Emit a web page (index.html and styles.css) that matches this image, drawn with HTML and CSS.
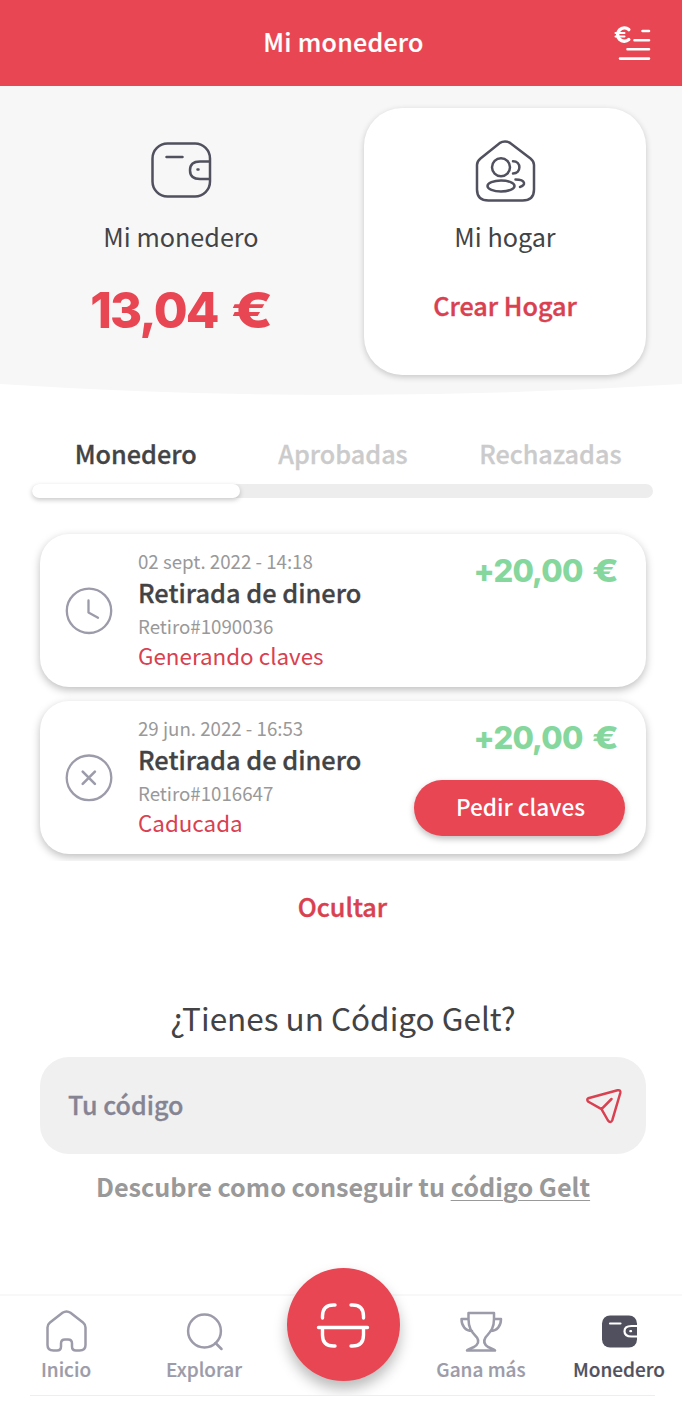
FILE: index.html
```html
<!DOCTYPE html>
<html lang="es">
<head>
<meta charset="utf-8">
<title>Mi monedero</title>
<link rel="stylesheet" href="styles.css">
</head>
<body>
<header class="topbar">
  <h1 class="topbar-title">Mi monedero</h1>
  <svg class="topbar-icon" width="40" height="40" viewBox="0 0 40 40" fill="none" stroke="#fff" stroke-width="2.600" stroke-linecap="round">
    <path d="M15.800 6.600A6.700 6.700 0 1 0 15.800 16.600" stroke-width="3.400"/>
    <path d="M2.500 10h9M2.500 13.400h9" stroke-width="2"/>
    <path d="M29.500 8h6.500M21.500 17.200h14.500M14.500 26.300h21.500M7 35.600h29"/>
  </svg>
</header>

<section class="hero">
  <div class="wallet">
    <svg class="hero-icon" width="62" height="62" viewBox="0 0 62 62" fill="none" stroke="#50505e" stroke-width="2.500" stroke-linecap="round">
      <rect x="2.500" y="4.500" width="57.500" height="53" rx="15"/>
      <path d="M16.500 18H32.500M59 22.500H50Q40 22.500 40 31.200T50 40H59M47.500 30.500h1" />
    </svg>
    <p class="hero-label">Mi monedero</p>
    <p class="balance">13,04 <span class="euro">€</span></p>
  </div>
  <div class="home-card">
    <svg class="hero-icon" width="62" height="66" viewBox="0 0 62 66" fill="none" stroke="#50505e" stroke-width="2.500" stroke-linecap="round">
      <path d="M25.500 4.200Q31 1 36.500 4.200L56.500 19.500Q60 22.300 60 26V50.500Q60 61.500 48.500 61.500H14.500Q3 61.500 3 50.500V26Q3 22.300 6.500 19.500Z"/>
      <circle cx="27" cy="28.300" r="9"/>
      <ellipse cx="27" cy="47" rx="13.500" ry="5.500"/>
      <path d="M39 22.200C47.500 22.200 47.500 34.500 39 34.500M41.500 40.500C52 40.500 52 46.500 46 48"/>
    </svg>
    <p class="hero-label">Mi hogar</p>
    <a class="create">Crear Hogar</a>
  </div>
</section>
<svg class="curve" width="682" height="11" viewBox="0 0 682 11"><path d="M0 0Q341 22 682 0Z" fill="#f7f7f7"/></svg>

<main>
  <nav class="tabs">
    <a class="tab active">Monedero</a>
    <a class="tab">Aprobadas</a>
    <a class="tab">Rechazadas</a>
  </nav>
  <div class="track"><div class="thumb"></div></div>

  <section class="moves">
    <article class="move">
      <svg class="move-icon" width="50" height="50" viewBox="0 0 50 50" fill="none" stroke="#9c9ba9" stroke-width="2.300" stroke-linecap="round" stroke-linejoin="round">
        <circle cx="25" cy="24.800" r="22.200"/><path d="M24.500 14.500v12l9.500 5.300"/>
      </svg>
      <div class="detail">
        <p class="small">02 sept. 2022 - 14:18</p>
        <h2 class="name">Retirada de dinero</h2>
        <p class="small ref">Retiro#1090036</p>
        <p class="status">Generando claves</p>
      </div>
      <div class="side"><p class="amount">+20,00 <span class="euro">€</span></p></div>
    </article>
    <article class="move">
      <svg class="move-icon" width="50" height="50" viewBox="0 0 50 50" fill="none" stroke="#9c9ba9" stroke-width="2.300" stroke-linecap="round">
        <circle cx="25" cy="24.800" r="22.300"/><path d="M18.700 18.700l12.200 12.200M30.900 18.700L18.700 30.900" stroke-width="2.600"/>
      </svg>
      <div class="detail">
        <p class="small">29 jun. 2022 - 16:53</p>
        <h2 class="name">Retirada de dinero</h2>
        <p class="small ref">Retiro#1016647</p>
        <p class="status">Caducada</p>
      </div>
      <div class="side"><p class="amount">+20,00 <span class="euro">€</span></p><button class="keys">Pedir claves</button></div>
    </article>
  </section>
  <a class="hide">Ocultar</a>

  <h2 class="question">¿Tienes un Código Gelt?</h2>
  <div class="field">
    <span class="placeholder">Tu código</span>
    <svg class="send" width="38" height="38" viewBox="0 0 38 38" fill="none" stroke="#d94150" stroke-width="2.500" stroke-linecap="round" stroke-linejoin="round">
      <path d="M3.200 12.200L32.500 4.300Q35.900 3.500 35.300 7L27.300 34.200Q25.500 37.800 23 34.500L16.500 23.200L3 15.500Q1.500 13.300 3.200 12.200ZM16.500 23.200L26.500 13"/>
    </svg>
  </div>
  <p class="hint">Descubre como conseguir tu <a class="code-link">código Gelt</a></p>
</main>

<footer class="bottom">
  <a class="item inicio">
    <svg width="44" height="44" viewBox="0 0 44 44" fill="none" stroke="#9c9ba9" stroke-width="2.500" stroke-linejoin="round">
      <path d="M18.500 3.800Q22.500 1 26.500 3.800L39 13.500Q41.500 15.500 41.500 18.500V36Q41.500 41.500 35.500 41.500H32Q28 41.500 28 37.500V34.500Q28 30.500 24 30.500H21Q17 30.500 17 34.500V37.500Q17 41.500 13 41.500H9.500Q3.500 41.500 3.500 36V18.500Q3.500 15.500 6 13.500Z"/>
    </svg>
    <span>Inicio</span>
  </a>
  <a class="item explorar">
    <svg width="44" height="44" viewBox="0 0 44 44" fill="none" stroke="#9c9ba9" stroke-width="2.500" stroke-linecap="round">
      <circle cx="22.500" cy="22" r="16.400"/><path d="M33.500 34l6 6"/>
    </svg>
    <span>Explorar</span>
  </a>
  <a class="item gana">
    <svg width="44" height="44" viewBox="0 0 44 44" fill="none" stroke="#9c9ba9" stroke-width="2.500" stroke-linecap="round" stroke-linejoin="round">
      <path d="M9.500 4H35V10C35 20 31 23 26.500 28.500Q23 34 29 38Q35 40.500 36 41.500H8Q9 40.500 15 38Q21.500 34 18 28.500C13 23 9.500 20 9.500 10ZM9.500 10H2.500C2.500 17 6.500 22 13 22M35 10H42C42 17 38 22 31.500 22"/>
    </svg>
    <span>Gana más</span>
  </a>
  <a class="item monedero">
    <svg width="44" height="44" viewBox="0 0 44 44" fill="none" stroke="#fff" stroke-width="2.200" stroke-linecap="round">
      <rect x="5" y="6.500" width="35" height="32" rx="8" fill="#50505e" stroke="none"/>
      <path d="M13 14.500H23.500M40.500 17H34.500Q27.500 17 27.500 22.200T34.500 27.500H40.500M33.300 22.200h.8"/>
    </svg>
    <span>Monedero</span>
  </a>
  <div class="scan-clip"><div class="scan">
    <svg width="56" height="56" viewBox="0 0 56 56" fill="none" stroke="#fff" stroke-width="3.400" stroke-linecap="round">
      <path d="M3.500 30.500h49M7.500 21V19Q7.500 8 18.500 8H20M36 8H37.500Q48.500 8 48.500 19V21M7.500 31V38Q7.500 49 18.500 49H20M48.500 31V38Q48.500 49 37.500 49H36"/>
    </svg>
  </div></div>
</footer>
</body>
</html>
```
FILE: styles.css
```css
* { box-sizing: border-box; margin: 0; padding: 0; }
body {
  width: 682px; height: 1404px; overflow: hidden; background: #fff; color: #434345;
  font-family: "Noto Sans CJK SC", "Noto Sans", sans-serif; white-space: nowrap;
}
svg { display: block; flex: none; }
.topbar { position: relative; height: 86px; background: #e84653; color: #fff; display: flex; align-items: center; justify-content: center; padding: 0 0 4px 5px; }
.topbar-title { font-size: 25px; line-height: 36px; font-weight: 500; letter-spacing: .25px; -webkit-text-stroke: .2px currentColor; }
.topbar-icon { position: absolute; left: 613px; top: 23px; }

.hero { height: 298px; background: #f7f7f7; display: flex; }
.wallet { width: 362px; padding-top: 53px; display: flex; flex-direction: column; align-items: center; }
.hero-label { font-size: 25.2px; line-height: 36px; margin-top: 17px; }
.balance { font: 800 49px/60px Inter, sans-serif; letter-spacing: -1.700px; color: #e84653; margin-top: 27px; }
.euro { display: inline-block; letter-spacing: 0; transform: scaleX(1.250); transform-origin: left; margin: 0 7px 0 4px; }
.home-card { width: 282px; height: 267px; margin: 21.500px 0 0 2px; border-radius: 38px; background: #fff; box-shadow: 0 2px 6px rgba(0,0,0,.2); display: flex; flex-direction: column; align-items: center; padding-top: 31px; }
.home-card .hero-label { margin-top: 13.500px; }
.create { font-size: 25.200px; line-height: 36px; font-weight: 500; color: #d94150; margin-top: 33px; -webkit-text-stroke: .4px currentColor; }

.tabs { display: flex; width: 622px; margin: 40px 0 0 32px; }
.tab { flex: 1; text-align: center; font-size: 25.200px; line-height: 36px; font-weight: 500; color: #cbcbcb; -webkit-text-stroke: .3px currentColor; }
.tab.active { color: #434345; }
.track { width: 621px; height: 14px; margin: 13px 0 0 32px; border-radius: 7px; background: #ededed; }
.thumb { width: 208px; height: 14px; border-radius: 7px; background: #fff; box-shadow: 0 2px 5px rgba(0,0,0,.22); }

.moves { margin-top: 25px; height: 338px; padding: 11px 36px 0 40px; display: flex; flex-direction: column; gap: 14px; overflow: hidden; }
.move { height: 153px; flex: none; border-radius: 29px; background: #fff; box-shadow: 0 3px 8px rgba(0,0,0,.26); display: flex; padding: 0 21px 0 24px; }
.move-icon { margin-top: 52px; }
.detail { margin-left: 24px; padding-top: 13px; }
.small { font-size: 18.700px; line-height: 28px; color: #99999a; }
.name { font-size: 25.350px; line-height: 36px; margin-top: -1px; font-weight: 500; -webkit-text-stroke: .3px currentColor; }
.ref { margin-top: 2px; }
.status { font-size: 22.400px; line-height: 32px; margin-top: -1px; color: #d94150; }
.side { margin-left: auto; display: flex; flex-direction: column; align-items: flex-end; }
.amount { margin: 17px 7px 0 0; font: 800 31px/40px Inter, sans-serif; letter-spacing: -.800px; color: #85d79d; }
.amount .euro { margin: 0 5px 0 3px; }
.keys { width: 211px; height: 56px; margin-top: 22px; padding: 0 0 2px 2px; border: 0; border-radius: 28px; background: #e84653; color: #fff; font: 500 22.600px/32px "Noto Sans CJK SC", sans-serif; box-shadow: 0 3px 6px rgba(0,0,0,.25); }
.hide { display: block; width: 685px; margin-top: 27px; text-align: center; font-size: 25.200px; line-height: 36px; font-weight: 500; color: #d94150; -webkit-text-stroke: .4px currentColor; }
.question { width: 686px; margin-top: 70px; text-align: center; font-size: 31.500px; line-height: 46px; font-weight: 400; }
.field { width: 606px; height: 97px; margin: 17px 0 0 40px; padding: 0 23px 0 28px; border-radius: 29px; background: #f0f0f1; display: flex; align-items: center; justify-content: space-between; }
.placeholder { padding-bottom: 4px; font-size: 25.100px; line-height: 36px; font-weight: 500; color: #858493; -webkit-text-stroke: .3px currentColor; }
.send { margin-bottom: 2px; }
.hint { width: 686px; margin-top: 14px; text-align: center; font-size: 25.200px; line-height: 36px; font-weight: 700; color: #99999a; }
.code-link { text-decoration: underline; text-decoration-thickness: 1px; text-underline-offset: 3px; }

.bottom { position: relative; height: 102px; margin-top: 90px; border-top: 2px solid #f8f8f8; }
.bottom::after { content: ""; display: block; position: absolute; left: 30px; bottom: 0; width: 625px; height: 1px; background: #eee; }
.item { position: absolute; top: 13px; width: 120px; display: flex; flex-direction: column; align-items: center; font-size: 19px; line-height: 28px; font-weight: 500; color: #9c9ba9; }
.item span { margin-top: 1.500px; -webkit-text-stroke: .2px currentColor; }
.inicio { left: 6px; }
.explorar { left: 144px; }
.gana { left: 421px; }
.monedero { left: 559px; color: #50505e; }
.scan-clip { position: absolute; left: 266.500px; top: -48px; width: 152px; height: 147px; overflow: hidden; padding: 20px; }
.scan { width: 113px; height: 113px; border-radius: 50%; background: #e84653; box-shadow: 0 8px 14px rgba(0,0,0,.27); display: flex; align-items: center; justify-content: center; }
```
